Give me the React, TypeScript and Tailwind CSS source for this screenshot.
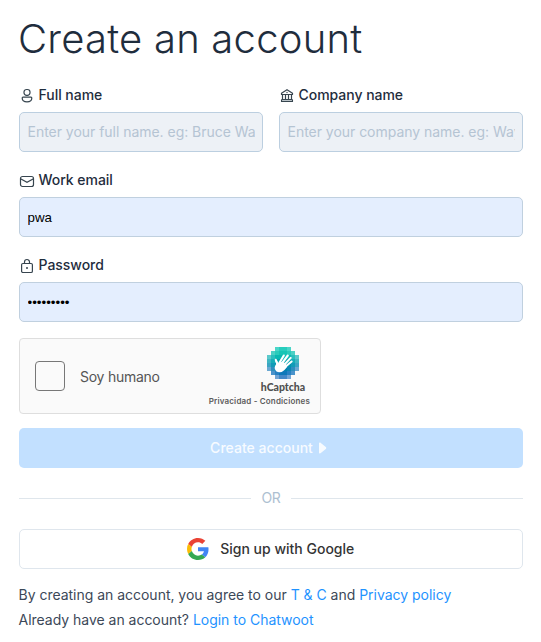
import React from "react";

function PersonIcon() {
  return (
    <svg width="16" height="16" viewBox="0 0 16 16" fill="none" stroke="#37454f" strokeWidth="1.2">
      <rect x="5" y="1.5" width="6" height="5.8" rx="2.6" />
      <path d="M4 9.2h8c.5 0 .8.4.8.9 0 2.4-2.1 3.8-4.8 3.8s-4.8-1.4-4.8-3.8c0-.5.3-.9.8-.9Z" />
    </svg>
  );
}

function BankIcon() {
  return (
    <svg width="16" height="16" viewBox="0 0 16 16" fill="none" stroke="#37454f" strokeLinejoin="round">
      <path d="M2.5 6.5V5.3L8 1.7l5.5 3.6v1.2Z" strokeWidth="1.2" />
      <path d="M3.5 6.5v5M6.5 6.5v5M9.5 6.5v5M12.5 6.5v5" strokeWidth="1.2" />
      <path d="M2.5 13.5v-1.2c0-.5.4-.8.8-.8h9.4c.5 0 .8.3.8.8v1.2Z" strokeWidth="1.1" fill="#b9c2c7" />
      <circle cx="8" cy="4.5" r=".7" fill="#37454f" stroke="none" />
    </svg>
  );
}

function MailIcon() {
  return (
    <svg width="16" height="16" viewBox="0 0 16 16" fill="none" stroke="#37454f" strokeWidth="1.2">
      <rect x="1.5" y="3.5" width="13" height="10" rx="2" />
      <path d="m1.5 5.7 6.5 3.6 6.5-3.6" />
    </svg>
  );
}

function LockIcon() {
  return (
    <svg width="16" height="16" viewBox="0 0 16 16" fill="none" stroke="#37454f" strokeWidth="1.2">
      <rect x="2.6" y="5.5" width="10.8" height="9" rx="1.3" />
      <path d="M5.5 5.5V4a2.5 2.5 0 0 1 5 0v1.5" />
      <circle cx="8" cy="10" r="1" fill="#37454f" stroke="none" />
    </svg>
  );
}

const CELL_ROWS: [number, string[]][] = [
  [2, ["#4ad5c8", "#27cdbd", "#27cdbd", "#4ad5c8"]],
  [1, ["#4bd0c5", "#2acbbb", "#16c5b5", "#16c5b5", "#2acbbb", "#4bd0c5"]],
  [0, ["#5cc9cb", "#2abfbd", "#08b8b2", "#08b8b2", "#08b8b2", "#08b8b2", "#2abfbd", "#5cc9cb"]],
  [0, ["#3fb6c2", "#16adb8", "#00a5ae", "#00a5ae", "#00a5ae", "#00a5ae", "#16adb8", "#3fb6c2"]],
  [0, ["#3ba5c3", "#129bb7", "#0094af", "#0094af", "#0094af", "#0094af", "#129bb7", "#3ba5c3"]],
  [0, ["#6ba8d2", "#2e8fbe", "#0d85b4", "#0082b0", "#0082b0", "#0d85b4", "#2e8fbe", "#6ba8d2"]],
  [1, ["#4a93cb", "#2781c2", "#0d78b9", "#0d78b9", "#2781c2", "#4a93cb"]],
  [2, ["#71a4d4", "#4288c8", "#4288c8", "#71a4d4"]],
];

function CaptchaLogo() {
  return (
    <svg width="32" height="32" viewBox="0 0 32 32">
      <g shapeRendering="crispEdges">
        {CELL_ROWS.map(([start, cells], y) =>
          cells.map((fill, x) => (
            <rect key={`${x}-${y}`} x={(start + x) * 4} y={y * 4} width="4" height="4" fill={fill} />
          ))
        )}
      </g>
      <g stroke="#fff" strokeLinecap="round" strokeLinejoin="round" fill="none" strokeWidth="2.1">
        <path d="M8.8 12.8 10.6 17" />
        <path d="m12 16.5 4.8-8M14.5 17l6.3-8.5M16.5 18.5l7.2-7.6M17.5 20.5l7.1-6" />
      </g>
      <path fill="#fff" d="M7.9 13.2 9.2 17c-.9 1.3-1.8 2.9-1.4 4.8.6 2.5 2.6 3.6 5 3.5 2.8-.1 4.2-1.8 5.8-3.5l1.6-2-1.6-3.4-3-1.6-3 .4-1.2 1.4-1.6-3.2Z" />
    </svg>
  );
}

function GoogleLogo() {
  return (
    <svg width="22" height="22" viewBox="0 0 48 48">
      <path fill="#EA4335" d="M24 9.5c3.54 0 6.71 1.22 9.21 3.6l6.85-6.85C35.9 2.38 30.47 0 24 0 14.62 0 6.51 5.38 2.56 13.22l7.98 6.19C12.43 13.72 17.74 9.5 24 9.5z" />
      <path fill="#4285F4" d="M46.98 24.55c0-1.57-.15-3.09-.38-4.55H24v9.02h12.94c-.58 2.96-2.26 5.48-4.78 7.18l7.73 6c4.51-4.18 7.09-10.36 7.09-17.65z" />
      <path fill="#FBBC05" d="M10.53 28.59c-.48-1.45-.76-2.99-.76-4.59s.27-3.14.76-4.59l-7.98-6.19C.92 16.46 0 20.12 0 24c0 3.88.92 7.54 2.56 10.78l7.97-6.19z" />
      <path fill="#34A853" d="M24 48c6.48 0 11.93-2.13 15.89-5.81l-7.73-6c-2.15 1.45-4.92 2.3-8.16 2.3-6.26 0-11.57-4.22-13.47-9.91l-7.98 6.19C6.51 42.62 14.62 48 24 48z" />
    </svg>
  );
}

type FieldProps = {
  label: string;
  icon: React.ReactNode;
  placeholder?: string;
  value?: string;
  type?: string;
};

function Field({ label, icon, placeholder, value, type = "text" }: FieldProps) {
  const filled = value !== undefined;
  return (
    <label className="block min-w-0 flex-1">
      <span className="flex h-[21px] items-center gap-[3.5px] text-[14px] font-medium tracking-[-0.03px] text-[#1f2d3d]">
        {icon}
        <span className="pb-[2px]">{label}</span>
      </span>
      <input
        type={type}
        placeholder={placeholder}
        defaultValue={value}
        className={
          filled
            ? "mt-[6px] block h-10 w-full rounded-[5px] border border-[#c0d0df] bg-[#e4eefe] px-[7.5px] font-['Liberation_Sans',sans-serif] text-[13.33px] text-black outline-none"
            : "mt-[6px] block h-10 w-full rounded-[5px] border border-[#bccfe0] bg-[#edf1f6] px-[7.5px] pb-[2px] text-[14px] tracking-[-0.03px] outline-none placeholder:text-[#b5c4d3]"
        }
      />
    </label>
  );
}

export default function App() {
  return (
    <main className="h-[642px] w-[541px] overflow-hidden bg-white pl-[19px] pr-[18px] pt-[9px] font-['Inter',sans-serif]">
      <h1 className="-ml-px h-[60px] whitespace-nowrap text-[40px] font-light leading-[60px] tracking-[0.22px] text-[#1f2d3d]">
        Create an account
      </h1>
      <form className="mt-4 flex flex-col">
        <div className="flex gap-4">
          <Field label="Full name" icon={<PersonIcon />} placeholder="Enter your full name. eg: Bruce Wayne" />
          <Field label="Company name" icon={<BankIcon />} placeholder="Enter your company name. eg: Wayne Enterprises" />
        </div>
        <div className="mt-[18px] flex">
          <Field label="Work email" icon={<MailIcon />} value="pwa" />
        </div>
        <div className="mt-[18px] flex">
          <Field label="Password" icon={<LockIcon />} value="password1" type="password" />
        </div>
        <div className="mt-4 flex h-[76px] w-[302px] items-center rounded-[4px] border border-[#dedede] bg-[#fafafa] pl-[15px] pr-[10px]">
          <span className="size-[30px] rounded-[4px] border border-[#777] bg-[#fafafa]" />
          <span className="ml-[15px] text-[14px] tracking-[-0.25px] text-[#555]">Soy humano</span>
          <div className="ml-auto flex h-full flex-col items-end pt-2">
            <div className="mr-[4px] flex w-[46px] flex-col items-center">
              <CaptchaLogo />
              <span className="mt-[2px] whitespace-nowrap font-['Lato',sans-serif] text-[10.5px] font-black leading-[13px] text-[#505050]">hCaptcha</span>
            </div>
            <span className="mt-[2px] whitespace-nowrap text-[8px] font-semibold leading-[10px] tracking-[0.17px] text-[#5c5c5c]">
              Privacidad - Condiciones
            </span>
          </div>
        </div>
        <button type="button" className="mt-[14px] flex h-10 items-center justify-center rounded-[5px] bg-[#c2e0ff] pr-[5px] text-[14px] font-medium tracking-[0.02px] text-[#f7fbff]">
          <span className="pb-[2px]">Create account</span>
          <svg className="ml-[6px]" width="8" height="12" viewBox="0 0 8 12" fill="currentColor">
            <path d="M0 1.6C0 .6 1 .2 1.8.9l5 4.2c.6.5.6 1.3 0 1.8l-5 4.2C1 11.8 0 11.4 0 10.4Z" />
          </svg>
        </button>
      </form>
      <div className="flex h-[61px] items-center gap-[10px] text-[14px] text-[#adc0d1]">
        <span className="h-px flex-1 bg-[#dfe6ec]" />
        <span className="pb-[2px] tracking-[-0.3px]">OR</span>
        <span className="h-px flex-1 bg-[#dfe6ec]" />
      </div>
      <button type="button" className="flex h-10 w-full items-center justify-center gap-[11.5px] rounded-[5px] border border-[#dfe6ed] pr-px text-[14px] font-medium text-[#343434]">
        <GoogleLogo />
        <span className="pb-[2px]">Sign up with Google</span>
      </button>
      <div className="-ml-[0.5px] mt-[13px] whitespace-nowrap text-[14px] leading-[25px] tracking-[-0.02px] text-[#3c4858]">
        <p>
          By creating an account, you agree to our <a className="text-[#1f93ff]">T &amp; C</a> and <a className="text-[#1f93ff]">Privacy policy</a>
        </p>
        <p>
          Already have an account? <a className="text-[#1f93ff]">Login to Chatwoot</a>
        </p>
      </div>
    </main>
  );
}
